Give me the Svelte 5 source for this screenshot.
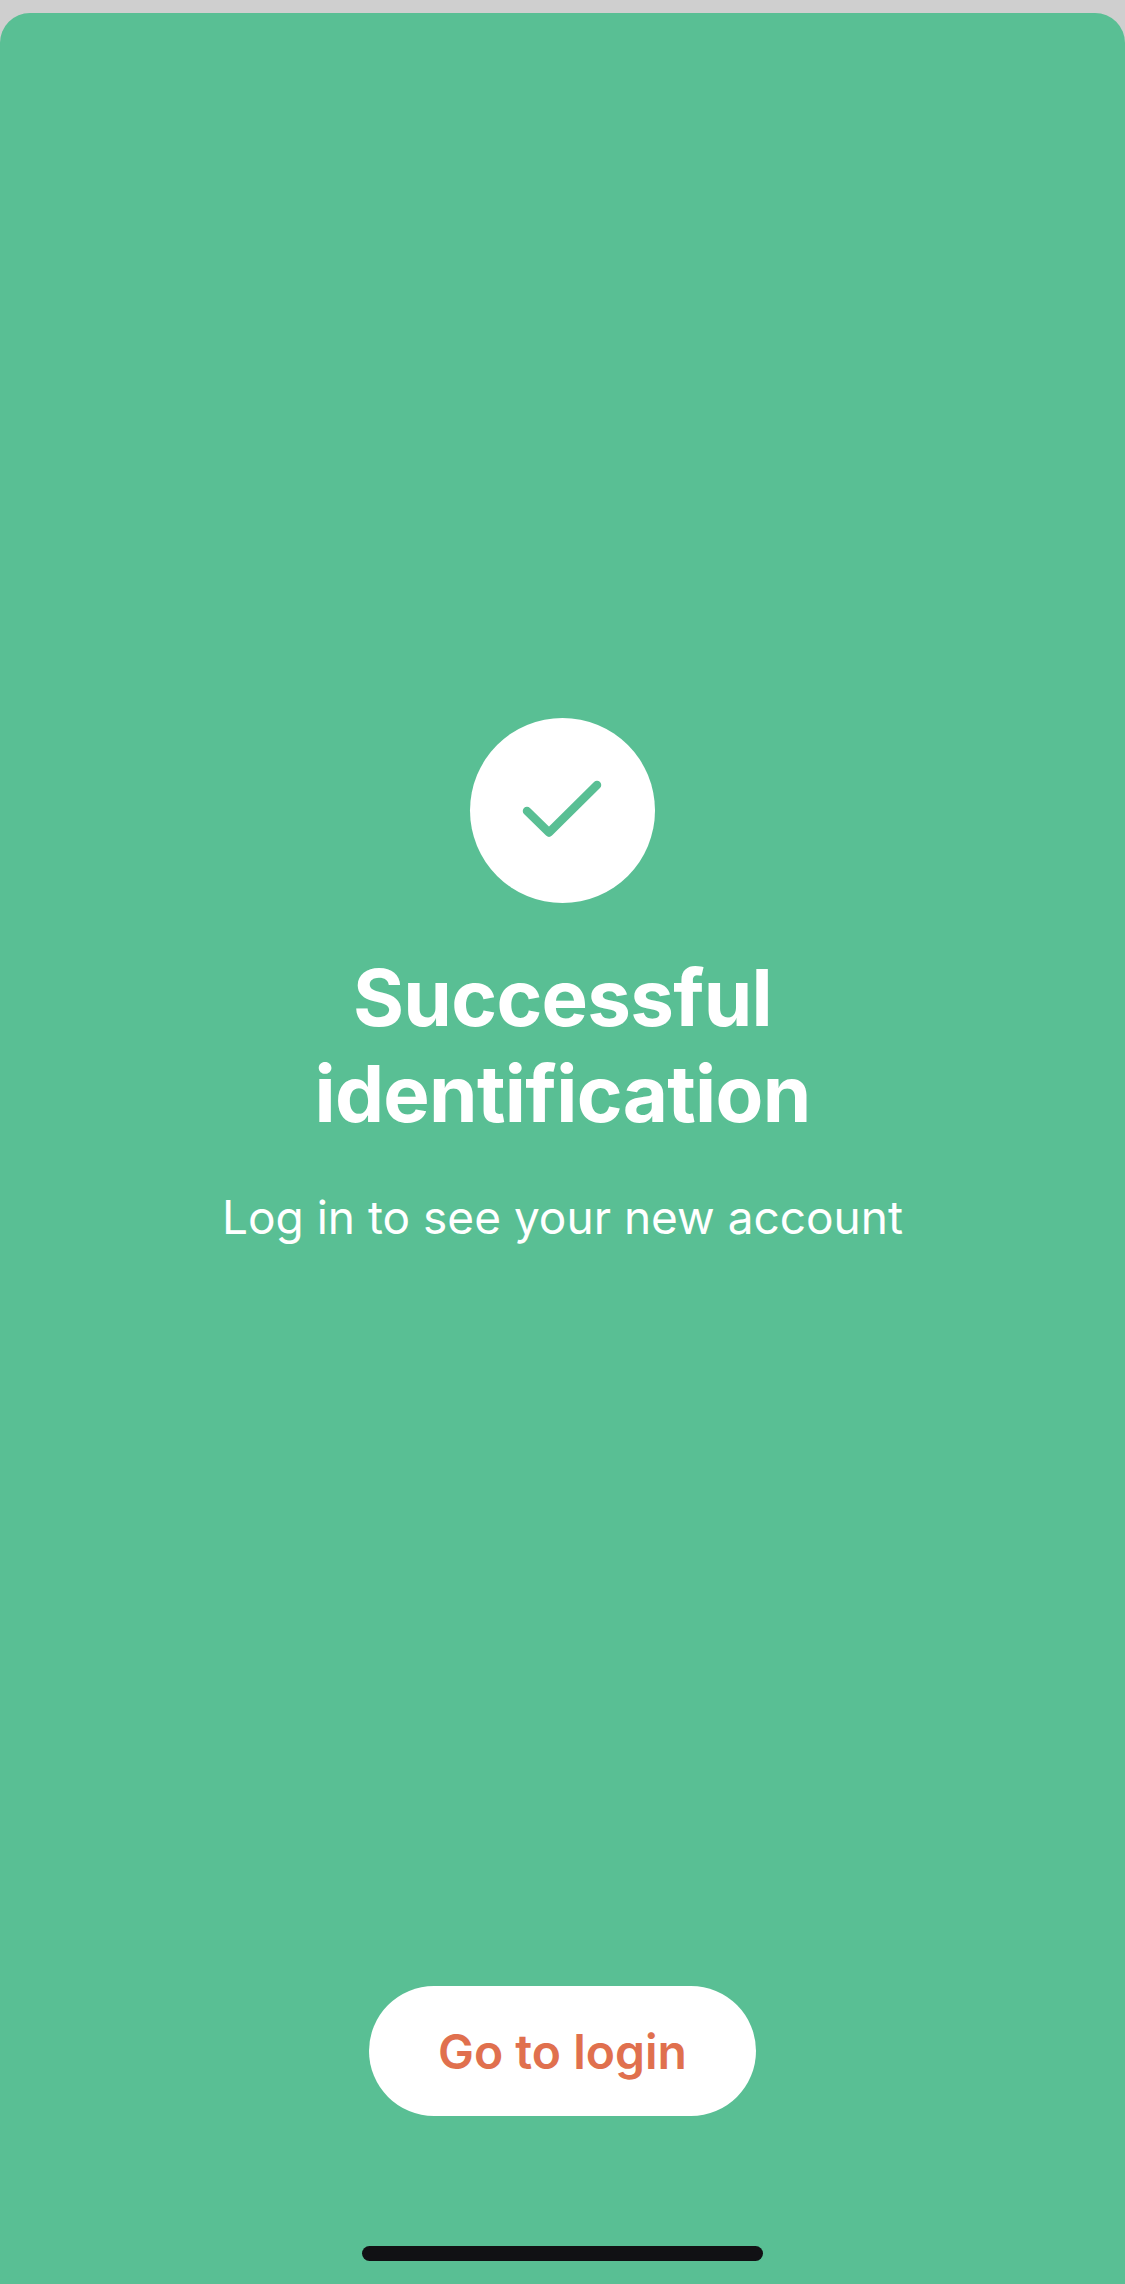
<script>
  let title = ['Successful', 'identification'];
</script>

<div class="screen">
  <div class="badge">
    <svg width="185" height="185" viewBox="0 0 185 185" fill="none">
      <path d="M57 93 L79 114.5 L127 67" stroke="#59bf94" stroke-width="8.5" stroke-linecap="round" stroke-linejoin="round" />
    </svg>
  </div>
  <h1>
    {#each title as line}
      <span>{line}</span>
    {/each}
  </h1>
  <p>Log in to see your new account</p>
  <button type="button">Go to login</button>
  <div class="home-bar"></div>
</div>

<style>
  :global(body) {
    margin: 0;
    background: #cfcfcf;
  }

  .screen {
    box-sizing: border-box;
    height: 2271px;
    margin-top: 13px;
    padding-top: 705px;
    padding-bottom: 23px;
    display: flex;
    flex-direction: column;
    align-items: center;
    background: #59bf94;
    border-radius: 30px 30px 0 0;
    font-family: Inter, "Liberation Sans", sans-serif;
    color: #fff;
    overflow: hidden;
  }

  .badge {
    width: 185px;
    height: 185px;
    background: #fff;
    border-radius: 50%;
    flex: none;
  }

  .badge svg {
    display: block;
  }

  h1 {
    margin: 47px 0 0;
    font-size: 78px;
    line-height: 96px;
    font-weight: 700;
    letter-spacing: -0.7px;
    text-align: center;
  }

  h1 span {
    display: block;
  }

  p {
    margin: 46px 0 0;
    font-size: 46px;
    line-height: 58px;
    font-weight: 400;
  }

  button {
    margin-top: auto;
    width: 387px;
    height: 130px;
    border: 0;
    border-radius: 65px;
    background: #fff;
    color: #e0704e;
    font-family: inherit;
    font-size: 48px;
    font-weight: 600;
  }

  .home-bar {
    margin-top: 130px;
    width: 401px;
    height: 15px;
    border-radius: 8px;
    background: #111114;
  }
</style>
